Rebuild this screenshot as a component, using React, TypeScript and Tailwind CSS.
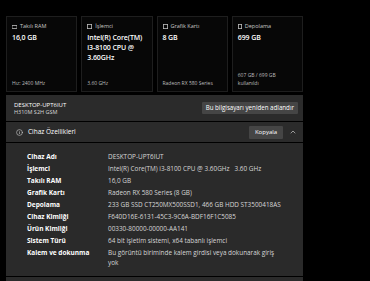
import { ChevronUp, Info } from "lucide-react"

const cards = [
  { icon: "ram", title: "Takılı RAM", value: "16,0 GB", foot: ["Hız: 2400 MHz"] },
  { icon: "cpu", title: "İşlemci", value: "Intel(R) Core(TM) i3‑8100 CPU @ 3.60GHz", foot: ["3.60 GHz"] },
  { icon: "gpu", title: "Grafik Kartı", value: "8 GB", foot: ["Radeon RX 580 Series"] },
  { icon: "disk", title: "Depolama", value: "699 GB", foot: ["607 GB / 699 GB", "kullanıldı"] },
]

const specs: [string, string][] = [
  ["Cihaz Adı", "DESKTOP-UPT6IUT"],
  ["İşlemci", "Intel(R) Core(TM) i3-8100 CPU @ 3.60GHz   3.60 GHz"],
  ["Takılı RAM", "16,0 GB"],
  ["Grafik Kartı", "Radeon RX 580 Series (8 GB)"],
  ["Depolama", "233 GB SSD CT250MX500SSD1, 466 GB HDD ST3500418AS"],
  ["Cihaz Kimliği", "F640D16E-6131-45C3-9C6A-BDF16F1C5085"],
  ["Ürün Kimliği", "00330-80000-00000-AA141"],
  ["Sistem Türü", "64 bit işletim sistemi, x64 tabanlı işlemci"],
  ["Kalem ve dokunma", "Bu görüntü biriminde kalem girdisi veya dokunarak giriş yok"],
]

function CardIcon({ kind }: { kind: string }) {
  // tiny glyphs in front of card titles
  if (kind === "ram")
    return (
      <svg width="5" height="4" viewBox="0 0 5 4" className="text-[#bdbdbd]">
        <rect x="0" y="0.5" width="5" height="3" fill="none" stroke="currentColor" strokeWidth="0.8" />
      </svg>
    )
  if (kind === "disk")
    return (
      <svg width="4" height="5" viewBox="0 0 4 5" className="text-[#bdbdbd]">
        <rect x="0.4" y="0.4" width="3.2" height="4.2" fill="none" stroke="currentColor" strokeWidth="0.8" />
      </svg>
    )
  return (
    <svg width="5" height="5" viewBox="0 0 5 5" className="text-[#bdbdbd]">
      <rect x="0.4" y="0.4" width="4.2" height="4.2" fill="none" stroke="currentColor" strokeWidth="0.8" />
    </svg>
  )
}

export default function App() {
  return (
    <div
      className="w-[370px] h-[281px] bg-black overflow-hidden text-white"
      style={{ fontFamily: '"Open Sans", "Noto Sans", sans-serif' }}
    >
      <div className="w-[297px] ml-[6px] pt-[16px]">
        {/* Summary cards */}
        <div className="grid grid-cols-4 gap-[4px]">
          {cards.map((c) => (
            <div
              key={c.title}
              className="h-[76px] bg-[#070707] border border-[#1e1e1e] px-[5px] pt-[6px] pb-[4px] flex flex-col"
            >
              <div className="flex items-center gap-[3px] text-[5.5px] leading-[7px] text-[#c8c8c8]">
                <CardIcon kind={c.icon} />
                <span>{c.title}</span>
              </div>
              <div className="mt-[3px] text-[7px] leading-[10px] font-semibold text-white tracking-[-0.1px]">
                {c.value}
              </div>
              <div className="mt-auto text-[5px] leading-[8px] text-[#bdbdbd]">
                {c.foot.map((f) => (
                  <div key={f}>{f}</div>
                ))}
              </div>
            </div>
          ))}
        </div>

        {/* Device name */}
        <div className="mt-[3px] h-[26px] bg-[#2b2b2b] flex items-center justify-between pl-[8px] pr-[5px]">
          <div>
            <div className="text-[6px] leading-[8px] text-white">DESKTOP-UPT6IUT</div>
            <div className="text-[5.5px] leading-[7px] text-[#d8d8d8]">H310M S2H GSM</div>
          </div>
          <button className="h-[12px] px-[4px] bg-[#454545] text-[6.2px] leading-[12px] text-white rounded-[1px]">
            Bu bilgisayarı yeniden adlandır
          </button>
        </div>

        {/* Specs header */}
        <div className="mt-[1px] h-[20px] bg-[#2b2b2b] flex items-center pl-[10px] pr-[6px]">
          <Info size={7} strokeWidth={2} className="text-[#d0d0d0]" />
          <span className="ml-[5px] text-[6.5px] text-white">Cihaz Özellikleri</span>
          <button className="ml-auto h-[13px] w-[34px] bg-[#454545] text-[6px] text-white rounded-[1px]">
            Kopyala
          </button>
          <ChevronUp size={8} strokeWidth={2} className="ml-[6px] text-[#d0d0d0]" />
        </div>

        {/* Specs table */}
        <div className="mt-[1px] h-[133px] bg-[#2a2a2a] pt-[8px] pl-[21px]">
          {specs.map(([k, v]) => (
            <div key={k} className="flex">
              <div className="w-[81px] shrink-0 text-[6.5px] leading-[12px] font-bold text-white">{k}</div>
              <div className="w-[178px] text-[6.4px] leading-[10px] py-[1px] text-[#d6d6d6] whitespace-pre-wrap">
                {v}
              </div>
            </div>
          ))}
        </div>
        <div className="mt-[1px] h-[4px] bg-[#2b2b2b]" />
      </div>
    </div>
  )
}
